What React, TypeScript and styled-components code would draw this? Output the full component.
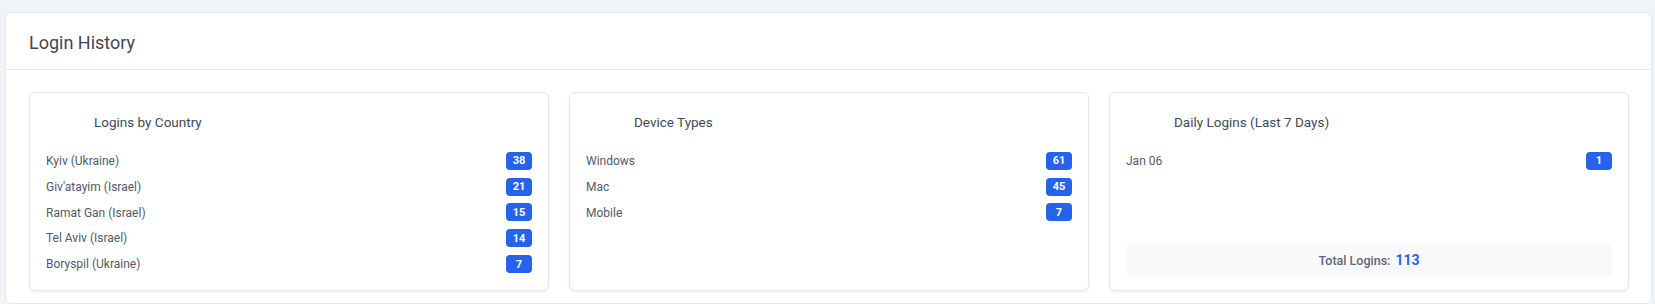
import styled, { createGlobalStyle } from "styled-components";

const GlobalStyle = createGlobalStyle`
  * {
    box-sizing: border-box;
  }

  html,
  body {
    margin: 0;
    padding: 0;
    background: #f0f3f8;
    overflow: hidden;
  }

  body {
    font-family: Roboto, "Liberation Sans", sans-serif;
    -webkit-font-smoothing: antialiased;
  }
`;

const Page = styled.main`
  padding: 12px 3px 0 5px;
`;

const Panel = styled.section`
  background: #fff;
  border: 1px solid #e3e8ef;
  border-radius: 6px;
`;

const PanelHeader = styled.header`
  padding: 16px 23px 12px;
  border-bottom: 1px solid #e2e8f0;
`;

const PanelTitle = styled.h2`
  margin: 0;
  font-size: 18px;
  line-height: 28px;
  font-weight: 400;
  color: #3f4756;
`;

const PanelBody = styled.div`
  display: grid;
  grid-template-columns: repeat(3, 1fr);
  gap: 20px;
  padding: 22px 22px 12px 23px;
`;

const StatCard = styled.article`
  display: flex;
  flex-direction: column;
  background: #fff;
  border: 1px solid #e5e7eb;
  border-radius: 6px;
  box-shadow: 0 1px 3px rgba(15, 23, 42, 0.08);
  padding: 16px 16px 13px;
`;

const CardTitle = styled.h3`
  margin: 0 0 13px;
  padding-left: 48px;
  font-size: 13.5px;
  line-height: 26px;
  font-weight: 400;
  color: #414a58;
`;

const StatList = styled.ul`
  list-style: none;
  margin: 0;
  padding: 0;
`;

const StatRow = styled.li`
  display: flex;
  align-items: center;
  justify-content: space-between;
  padding: 3px 0;
  font-size: 12px;
  color: #525a66;
`;

const StatLabel = styled.span`
  padding-top: 2px;
  line-height: 17.8px;
`;

const Badge = styled.span`
  display: inline-flex;
  align-items: center;
  justify-content: center;
  min-width: 26px;
  height: 18px;
  padding: 0 6px;
  border-radius: 4px;
  background: #2563eb;
  color: #fff;
  font-size: 11px;
  font-weight: 700;
`;

const TotalBox = styled.div`
  margin-top: auto;
  display: flex;
  align-items: center;
  justify-content: center;
  gap: 5px;
  height: 33px;
  border-radius: 6px;
  background: #f8f9fb;
  font-size: 12.5px;
  font-weight: 500;
  color: #5f6773;
`;

const TotalValue = styled.span`
  font-size: 14px;
  font-weight: 700;
  color: #2563eb;
`;

type Stat = { label: string; count: number };

const countries: Stat[] = [
  { label: "Kyiv (Ukraine)", count: 38 },
  { label: "Giv'atayim (Israel)", count: 21 },
  { label: "Ramat Gan (Israel)", count: 15 },
  { label: "Tel Aviv (Israel)", count: 14 },
  { label: "Boryspil (Ukraine)", count: 7 },
];

const devices: Stat[] = [
  { label: "Windows", count: 61 },
  { label: "Mac", count: 45 },
  { label: "Mobile", count: 7 },
];

const daily: Stat[] = [{ label: "Jan 06", count: 1 }];

const StatCardView = ({
  title,
  stats,
  total,
}: {
  title: string;
  stats: Stat[];
  total?: number;
}) => (
  <StatCard>
    <CardTitle>{title}</CardTitle>
    <StatList>
      {stats.map((s) => (
        <StatRow key={s.label}>
          <StatLabel>{s.label}</StatLabel>
          <Badge>{s.count}</Badge>
        </StatRow>
      ))}
    </StatList>
    {total !== undefined && (
      <TotalBox>
        Total Logins: <TotalValue>{total}</TotalValue>
      </TotalBox>
    )}
  </StatCard>
);

export default function App() {
  return (
    <>
      <GlobalStyle />
      <Page>
        <Panel>
          <PanelHeader>
            <PanelTitle>Login History</PanelTitle>
          </PanelHeader>
          <PanelBody>
            <StatCardView title="Logins by Country" stats={countries} />
            <StatCardView title="Device Types" stats={devices} />
            <StatCardView title="Daily Logins (Last 7 Days)" stats={daily} total={113} />
          </PanelBody>
        </Panel>
      </Page>
    </>
  );
}
